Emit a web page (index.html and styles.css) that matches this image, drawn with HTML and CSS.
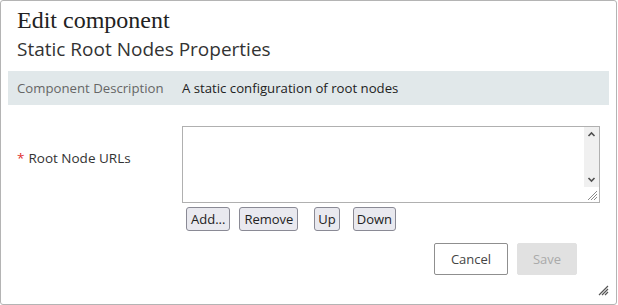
FILE: index.html
```html
<!DOCTYPE html>
<html lang="en">
<head>
  <meta charset="UTF-8" />
  <title>Edit component</title>
  <link rel="stylesheet" href="styles.css">
</head>
<body>

<div class="dialog">
  <h1>Edit component</h1>
  <h2>Static Root Nodes Properties</h2>

  <div class="desc">
    <span class="desc-label">Component Description</span>
    <span class="desc-value">A static configuration of root nodes</span>
  </div>

  <div class="row">
    <label class="row-label"><span class="req">*</span>Root Node URLs</label>
    <div class="row-field">
      <div class="urls-box">
        <textarea class="urls"></textarea>
        <div class="vscroll">
          <div class="track">
            <svg width="15" height="15" viewBox="0 0 15 15"><path d="M4.5 9 L7.5 6 L10.5 9" fill="none" stroke="#505050" stroke-width="1.6"/></svg>
            <svg width="15" height="15" viewBox="0 0 15 15"><path d="M4.5 6 L7.5 9 L10.5 6" fill="none" stroke="#505050" stroke-width="1.6"/></svg>
          </div>
          <svg class="tgrip" width="15" height="15" viewBox="0 0 15 15">
            <path d="M13 4 L4 13 M13 7 L7 13 M13 10 L10 13" stroke="#8a8a8a" stroke-width="1"/>
          </svg>
        </div>
      </div>
      <div class="list-btns">
        <button class="small">Add...</button>
        <button class="small">Remove</button>
        <button class="small up">Up</button>
        <button class="small down">Down</button>
      </div>
    </div>
  </div>

  <div class="footer">
    <button class="cancel">Cancel</button>
    <button class="save" disabled>Save</button>
  </div>

  <svg class="grip" width="12" height="12" viewBox="0 0 12 12">
    <path d="M11 2 L2 11 M11 5 L5 11 M11 8 L8 11" stroke="#555" stroke-width="1.2"/>
  </svg>
</div>

</body>
</html>
```

FILE: styles.css
```css
html, body {
  margin: 0;
  padding: 0;
  background: #fff;
  font-family: 'Open Sans', 'Noto Sans', sans-serif;
  color: #333;
}
.dialog {
  position: relative;
  box-sizing: border-box;
  width: 617px;
  height: 305px;
  border: 1px solid #b4b4b4;
  border-radius: 3px;
  padding: 0 7px;
}
h1 {
  margin: 0;
  padding: 5px 0 0 9px;
  font-family: 'Liberation Serif', serif;
  font-weight: normal;
  font-size: 24px;
  line-height: 28px;
  color: #222;
}
h2 {
  margin: 0;
  padding: 2px 0 0 9px;
  font-weight: normal;
  font-size: 19px;
  line-height: 27px;
  color: #333;
}
.desc {
  display: flex;
  margin-top: 8px;
  height: 34px;
  align-items: center;
  background: #e1e8ea;
  font-size: 13.2px;
}
.desc-label {
  width: 165px;
  padding-left: 9px;
  color: #666;
}
.desc-value {
  color: #222;
}
.row {
  display: flex;
  margin-top: 21px;
}
.row-label {
  width: 165px;
  padding-left: 9px;
  padding-top: 23px;
  font-size: 13.5px;
  color: #333;
}
.req {
  color: #e03030;
  margin-right: 4px;
}
.row-field {
  width: 418px;
}
.urls-box {
  display: flex;
  box-sizing: border-box;
  height: 77px;
  border: 1px solid #b0b0b0;
}
.urls {
  flex: 1;
  margin: 0;
  border: none;
  outline: none;
  resize: none;
  font-family: inherit;
}
.vscroll {
  display: flex;
  flex-direction: column;
  width: 15px;
}
.track {
  flex: 1;
  display: flex;
  flex-direction: column;
  justify-content: space-between;
  background: #f0f0f0;
}
.track svg, .tgrip {
  display: block;
}
.list-btns {
  display: flex;
  gap: 9px;
  margin-top: 4px;
  padding-left: 4px;
}
.small {
  box-sizing: border-box;
  height: 24px;
  padding: 0 4px;
  border: 1px solid #8a8a95;
  border-radius: 3px;
  background: #e9e9ef;
  font-family: inherit;
  font-size: 13px;
  color: #222;
}
.small.up {
  margin-left: 7px;
  padding: 0 3px;
}
.small.down {
  margin-left: 4px;
  padding: 0 3px;
}
.footer {
  display: flex;
  justify-content: flex-end;
  gap: 9px;
  margin-top: 12px;
  padding-right: 32px;
}
.footer button {
  height: 32px;
  font-family: inherit;
  font-size: 13px;
  border-radius: 2px;
}
.cancel {
  width: 74px;
  background: #fff;
  border: 1px solid #8f8f8f;
  color: #444;
}
.save {
  width: 60px;
  background: #e1e1e1;
  border: 1px solid #e1e1e1;
  color: #aaa;
}
.grip {
  position: absolute;
  right: 7px;
  bottom: 8px;
}
```
